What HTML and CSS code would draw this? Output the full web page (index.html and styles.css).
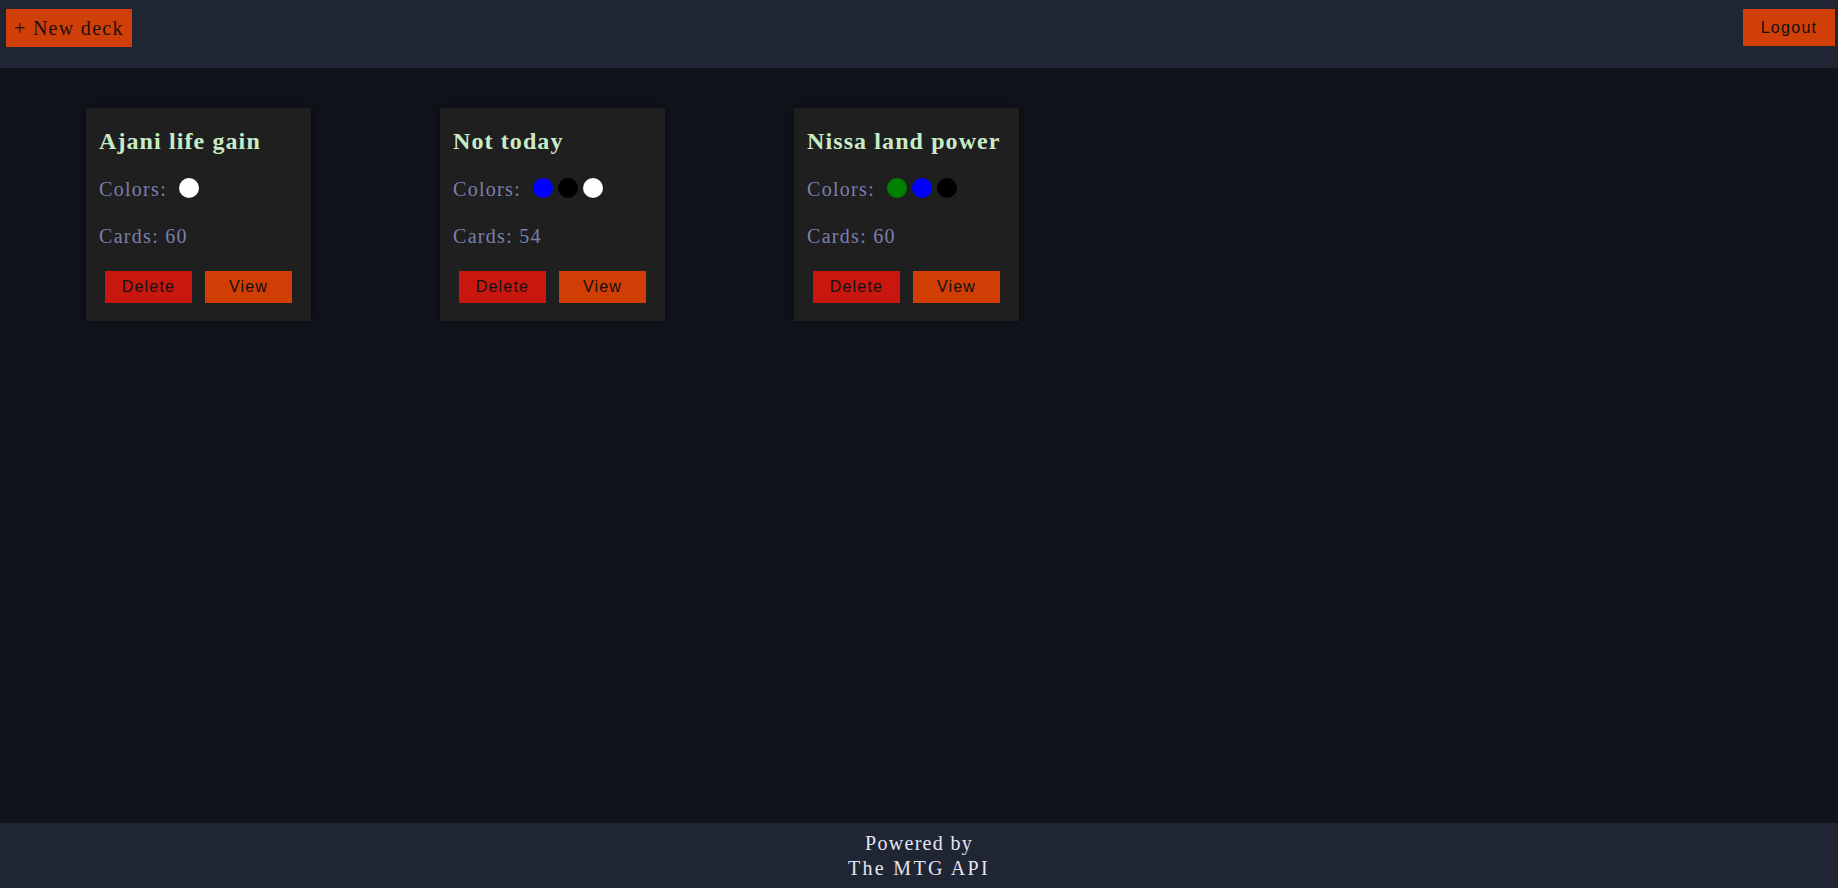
FILE: index.html
```html
<!DOCTYPE html>
<html lang="en">
<head>
<meta charset="utf-8">
<title>Decks</title>
<link rel="stylesheet" href="styles.css">
</head>
<body>
<div class="app">
  <header class="topbar">
    <button class="btn-new">+ New deck</button>
    <button class="btn-logout">Logout</button>
  </header>
  <main class="decks">
    <div class="card">
      <h2 class="card-title">Ajani life gain</h2>
      <div class="row">Colors: <span class="dots"><span class="dot white"></span></span></div>
      <div class="row">Cards: 60</div>
      <div class="actions"><button class="btn btn-delete">Delete</button><button class="btn btn-view">View</button></div>
    </div>
    <div class="card">
      <h2 class="card-title">Not today</h2>
      <div class="row">Colors: <span class="dots"><span class="dot blue"></span><span class="dot black"></span><span class="dot white"></span></span></div>
      <div class="row">Cards: 54</div>
      <div class="actions"><button class="btn btn-delete">Delete</button><button class="btn btn-view">View</button></div>
    </div>
    <div class="card">
      <h2 class="card-title">Nissa land power</h2>
      <div class="row">Colors: <span class="dots"><span class="dot green"></span><span class="dot blue"></span><span class="dot black"></span></span></div>
      <div class="row">Cards: 60</div>
      <div class="actions"><button class="btn btn-delete">Delete</button><button class="btn btn-view">View</button></div>
    </div>
  </main>
  <footer class="footer">
    <div>Powered by</div>
    <div class="footer-api">The MTG API</div>
  </footer>
</div>
</body>
</html>
```
FILE: styles.css
```css
html, body {
  margin: 0;
  padding: 0;
  height: 100%;
}
body {
  background: #10131b;
  font-family: "Liberation Serif", "Times New Roman", serif;
  font-size: 20px;
  letter-spacing: 1.3px;
}
.app {
  display: flex;
  flex-direction: column;
  min-height: 100vh;
}
.topbar {
  height: 68px;
  box-sizing: border-box;
  background: #1f2533;
  display: flex;
  justify-content: space-between;
  align-items: flex-start;
  padding: 9px 3px 0 6px;
}
.btn-new {
  height: 38px;
  padding: 0 8px;
  border: none;
  background: #d13f09;
  color: #1a1010;
  font-family: "Liberation Serif", "Times New Roman", serif;
  font-size: 20px;
  letter-spacing: 1.3px;
  cursor: pointer;
}
.btn-logout {
  height: 37px;
  width: 92px;
  padding: 0;
  border: none;
  background: #d13f09;
  color: #111;
  font-family: "Liberation Sans", Arial, sans-serif;
  font-size: 16px;
  letter-spacing: 1.3px;
  cursor: pointer;
}
.decks {
  flex: 1;
  display: flex;
  align-items: flex-start;
  gap: 129px;
  padding: 40px 0 0 86px;
}
.card {
  width: 225px;
  box-sizing: border-box;
  background: #1f1f1f;
  padding: 19px 13px 18px;
  box-shadow: 0 0 10px rgba(0, 0, 0, 0.45);
}
.card-title {
  margin: 0;
  font-size: 24px;
  line-height: 28px;
  font-weight: bold;
  letter-spacing: 1.1px;
  color: #c8ecc6;
  white-space: nowrap;
}
.row {
  display: flex;
  align-items: flex-start;
  color: #7a7fae;
  line-height: 23px;
  margin-top: 23px;
}
.row + .row {
  margin-top: 24px;
}
.dots {
  display: flex;
  gap: 5px;
  margin-left: 12px;
}
.dot {
  width: 20px;
  height: 20px;
  border-radius: 50%;
}
.dot.white { background: #ffffff; }
.dot.black { background: #000000; }
.dot.blue { background: #0000ff; }
.dot.green { background: #008000; }
.actions {
  display: flex;
  justify-content: center;
  gap: 13px;
  margin-top: 23px;
}
.btn {
  width: 87px;
  height: 32px;
  border: none;
  padding: 0;
  color: #111;
  font-family: "Liberation Sans", Arial, sans-serif;
  font-size: 16px;
  letter-spacing: 1.2px;
  cursor: pointer;
}
.btn-delete { background: #c8170f; }
.btn-view { background: #d03d05; }
.footer {
  height: 65px;
  box-sizing: border-box;
  background: #1f2533;
  color: #e4e4f2;
  text-align: center;
  line-height: 25px;
  padding-top: 8px;
}
.footer-api {
  letter-spacing: 2.3px;
}
```
